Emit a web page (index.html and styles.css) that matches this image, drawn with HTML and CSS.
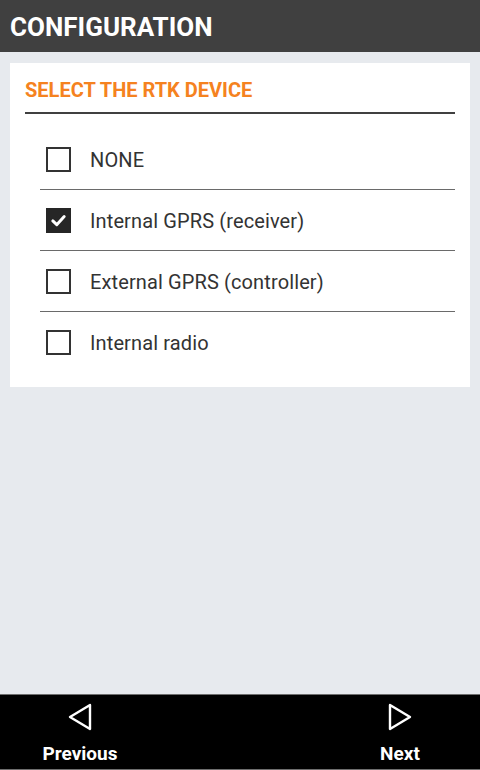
FILE: index.html
```html
<!DOCTYPE html>
<html>
<head>
<meta charset="utf-8">
<link rel="stylesheet" href="styles.css">
</head>
<body>
<div class="app">
  <header class="topbar"><h1 class="title">CONFIGURATION</h1></header>
  <main class="content">
    <section class="card">
      <h2 class="card-title">SELECT THE RTK DEVICE</h2>
      <ul class="options">
        <li class="option"><span class="box"></span><span class="label">NONE</span></li>
        <li class="option"><span class="box checked"><svg viewBox="0 0 24 24" width="24" height="24"><path d="M5.5 12.5 L10 16.8 L18.5 7.5" fill="none" stroke="#fff" stroke-width="3.4" stroke-linecap="round" stroke-linejoin="round"/></svg></span><span class="label">Internal GPRS (receiver)</span></li>
        <li class="option"><span class="box"></span><span class="label">External GPRS (controller)</span></li>
        <li class="option"><span class="box"></span><span class="label">Internal radio</span></li>
      </ul>
    </section>
  </main>
  <footer class="bottombar">
    <button class="nav-btn">
      <svg viewBox="0 0 26 28" width="26" height="28"><path d="M23 2 L3 14 L23 26 Z" fill="none" stroke="#fff" stroke-width="2.4" stroke-linejoin="round"/></svg>
      <span>Previous</span>
    </button>
    <button class="nav-btn">
      <svg viewBox="0 0 26 28" width="26" height="28"><path d="M3 2 L23 14 L3 26 Z" fill="none" stroke="#fff" stroke-width="2.4" stroke-linejoin="round"/></svg>
      <span>Next</span>
    </button>
  </footer>
</div>
</body>
</html>
```

FILE: styles.css
```css
* { box-sizing: border-box; }
html, body { margin: 0; padding: 0; height: 100%; }
body {
  font-family: Roboto, "Liberation Sans", Arial, sans-serif;
  background: #e7eaee;
}
.app {
  display: flex;
  flex-direction: column;
  height: 770px;
}
.topbar {
  height: 52px;
  background: #404040;
  display: flex;
  align-items: center;
  padding-left: 10px;
  flex-shrink: 0;
}
.title {
  margin: 0;
  color: #fff;
  font-size: 26px;
  font-weight: 700;
  letter-spacing: 0;
  line-height: 1;
  padding-top: 1px;
}
.content {
  flex: 1;
  padding: 11px 10px;
}
.card {
  background: #fff;
  padding: 15px 15px 15px 15px;
}
.card-title {
  margin: 0;
  color: #f58220;
  font-size: 20px;
  font-weight: 700;
  line-height: 24px;
  padding-bottom: 10px;
  border-bottom: 2px solid #404040;
}
.options {
  list-style: none;
  margin: 0;
  padding: 15px 0 0 15px;
}
.option {
  height: 61px;
  display: flex;
  align-items: center;
  border-bottom: 1px solid #6a6a6a;
  padding-left: 6px;
}
.option:last-child { border-bottom: none; height: 60px; }
.box {
  width: 25px;
  height: 25px;
  border: 2px solid #333;
  display: flex;
  align-items: center;
  justify-content: center;
  flex-shrink: 0;
}
.box.checked {
  background: #262626;
  border-color: #262626;
}
.box svg { width: 21px; height: 21px; }
.label {
  margin-left: 19px;
  padding-top: 2px;
  font-size: 20px;
  letter-spacing: 0.12px;
  color: #333;
}
.bottombar {
  height: 76px;
  background: #000;
  border-top: 1px solid #6e6e6e;
  border-bottom: 1px solid #6e6e6e;
  display: flex;
  justify-content: space-between;
  flex-shrink: 0;
}
.nav-btn {
  width: 160px;
  background: none;
  border: none;
  padding: 8px 0 0 0;
  display: flex;
  flex-direction: column;
  align-items: center;
  color: #fff;
  font-family: Roboto, "Liberation Sans", Arial, sans-serif;
  font-weight: 700;
  font-size: 19px;
  line-height: 22px;
  gap: 12px;
}
```
